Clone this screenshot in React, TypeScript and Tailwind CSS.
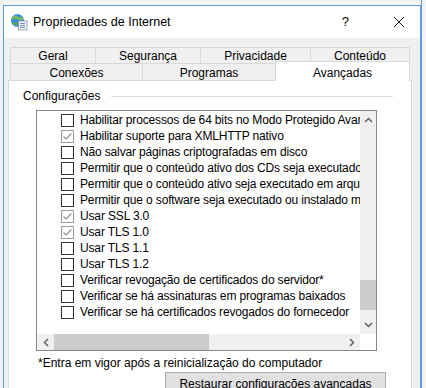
import React from "react";

const rows: { label: string; checked: boolean }[] = [
  { label: "Habilitar processos de 64 bits no Modo Protegido Avançado*", checked: false },
  { label: "Habilitar suporte para XMLHTTP nativo", checked: true },
  { label: "Não salvar páginas criptografadas em disco", checked: false },
  { label: "Permitir que o conteúdo ativo dos CDs seja executado no computador*", checked: false },
  { label: "Permitir que o conteúdo ativo seja executado em arquivos do computador*", checked: false },
  { label: "Permitir que o software seja executado ou instalado mesmo se a assinatura for inválida", checked: false },
  { label: "Usar SSL 3.0", checked: true },
  { label: "Usar TLS 1.0", checked: true },
  { label: "Usar TLS 1.1", checked: false },
  { label: "Usar TLS 1.2", checked: false },
  { label: "Verificar revogação de certificados do servidor*", checked: false },
  { label: "Verificar se há assinaturas em programas baixados", checked: false },
  { label: "Verificar se há certificados revogados do fornecedor", checked: false },
];

function CheckBox({ checked }: { checked: boolean }) {
  return (
    <span
      className={
        "flex h-[13px] w-[13px] shrink-0 items-center justify-center border bg-white " +
        (checked ? "border-[#9a9a9a]" : "border-[#333333]")
      }
    >
      {checked && (
        <svg width="11" height="11" viewBox="0 0 11 11">
          <path d="M1.5 5.5 L4 8 L9.5 2.5" fill="none" stroke="#8c8c8c" strokeWidth="1.1" />
        </svg>
      )}
    </span>
  );
}

function IeIcon() {
  return (
    <svg width="18" height="18" viewBox="0 0 18 18">
      <circle cx="7.5" cy="7.5" r="6.5" fill="#3a8fd6" />
      <path d="M2 6 Q5 3 8 5 Q10 7 13 5" fill="none" stroke="#7cc04a" strokeWidth="2.4" />
      <path d="M3 10 Q6 12 9 10" fill="none" stroke="#5aa83a" strokeWidth="1.8" />
      <rect x="8.5" y="8" width="8.5" height="9" fill="#f4f4f4" stroke="#7a8ea8" strokeWidth="0.8" />
      <path d="M10 10.5 h5 M10 12.5 h5 M10 14.5 h5" stroke="#5a7dbd" strokeWidth="0.9" />
    </svg>
  );
}

export default function App() {
  const tabTop = ["Geral", "Segurança", "Privacidade", "Conteúdo"];
  const topW = ["w-[85px]", "w-[105px]", "w-[110px]", "w-[100px]"];
  return (
    <div
      className="relative h-[388px] w-[426px] overflow-hidden bg-[#f3f3f3] pl-[3px] pt-[5px] text-[12px] text-black"
      style={{ fontFamily: "'Liberation Sans', Arial, sans-serif" }}
    >
      <div className="absolute right-[4px] top-0 h-full w-px bg-[#5a9bd6]" />
      <div className="relative flex h-[400px] w-[418px] flex-col border-x border-t border-[#5c9ede] bg-[#f0f0f0]">
        <div className="flex h-[32px] items-center bg-white pl-[6px]">
          <IeIcon />
          <span className="ml-[5px] text-[12.5px]">Propriedades de Internet</span>
          <span className="ml-auto mr-[44px] text-[13px]">?</span>
          <svg width="12" height="12" viewBox="0 0 12 12" className="mr-[15px]">
            <path d="M1 1 L11 11 M11 1 L1 11" stroke="#111" strokeWidth="1" />
          </svg>
        </div>

        <div className="ml-[6px] mt-[9px] w-[402px]">
          <div className="flex">
            {tabTop.map((t, i) => (
              <div
                key={t}
                className={
                  "flex h-[16px] items-center justify-center border-l border-t border-[#d9d9d9] bg-[#f0f0f0] pt-[1px] " +
                  topW[i] +
                  (i === 3 ? " border-r" : "")
                }
              >
                {t}
              </div>
            ))}
          </div>
          <div className="flex items-end">
            <div className="flex h-[17px] w-[132px] items-center justify-center border-l border-t border-[#d9d9d9] pt-[1px]">
              Conexões
            </div>
            <div className="flex h-[17px] w-[133px] items-center justify-center border-l border-t border-[#d9d9d9] pt-[1px]">
              Programas
            </div>
            <div className="relative z-10 -mt-[2px] mb-[-1px] flex h-[20px] w-[135px] items-start justify-center border-x border-t border-[#d9d9d9] bg-white pt-[2px]">
              Avançadas
            </div>
          </div>
        </div>

        <div className="ml-[4px] h-[320px] w-[404px] border border-[#d9d9d9] bg-white">
          <div className="flex items-center pl-[14px] pt-[6px]">
            <span>Configurações</span>
            <div className="ml-[11px] mr-[18px] h-px flex-1 bg-[#dcdcdc]" />
          </div>
          <div className="ml-[27px] mt-[5px] flex h-[241px] w-[341px] flex-col border border-[#828790]">
            <div className="flex min-h-0 flex-1">
              <div className="flex-1 overflow-hidden pl-[24px] pt-[1px]">
                {rows.map((r) => (
                  <div key={r.label} className="flex h-[16px] items-center gap-[6px] whitespace-nowrap">
                    <CheckBox checked={r.checked} />
                    <span className="tracking-[-0.15px]">{r.label}</span>
                  </div>
                ))}
              </div>
              <div className="flex w-[16px] flex-col bg-[#f0f0f0]">
                <div className="flex h-[18px] items-center justify-center">
                  <svg width="9" height="6" viewBox="0 0 9 6">
                    <path d="M1 5 L4.5 1.5 L8 5" fill="none" stroke="#606060" strokeWidth="1.5" />
                  </svg>
                </div>
                <div className="flex-1" />
                <div className="mb-[6px] h-[30px] bg-[#cdcdcd]" />
                <div className="flex h-[18px] items-center justify-center">
                  <svg width="9" height="6" viewBox="0 0 9 6">
                    <path d="M1 1 L4.5 4.5 L8 1" fill="none" stroke="#606060" strokeWidth="1.5" />
                  </svg>
                </div>
              </div>
            </div>
            <div className="flex h-[16px]">
              <div className="flex flex-1 items-center bg-[#f0f0f0]">
                <div className="flex w-[17px] items-center justify-center">
                  <svg width="6" height="9" viewBox="0 0 6 9">
                    <path d="M5 1 L1.5 4.5 L5 8" fill="none" stroke="#606060" strokeWidth="1.5" />
                  </svg>
                </div>
                <div className="h-full w-[155px] bg-[#cdcdcd]" />
                <div className="flex-1" />
                <div className="flex w-[17px] items-center justify-center">
                  <svg width="6" height="9" viewBox="0 0 6 9">
                    <path d="M1 1 L4.5 4.5 L1 8" fill="none" stroke="#606060" strokeWidth="1.5" />
                  </svg>
                </div>
              </div>
              <div className="w-[16px] bg-white" />
            </div>
          </div>
          <div className="ml-[29px] mt-[3px]">*Entra em vigor após a reinicialização do computador</div>
          <div className="ml-[156px] mt-0 flex h-[24px] w-[221px] items-center justify-center border border-[#adadad] bg-[#e1e1e1]">
            Restaurar configurações avançadas
          </div>
        </div>
      </div>
    </div>
  );
}
